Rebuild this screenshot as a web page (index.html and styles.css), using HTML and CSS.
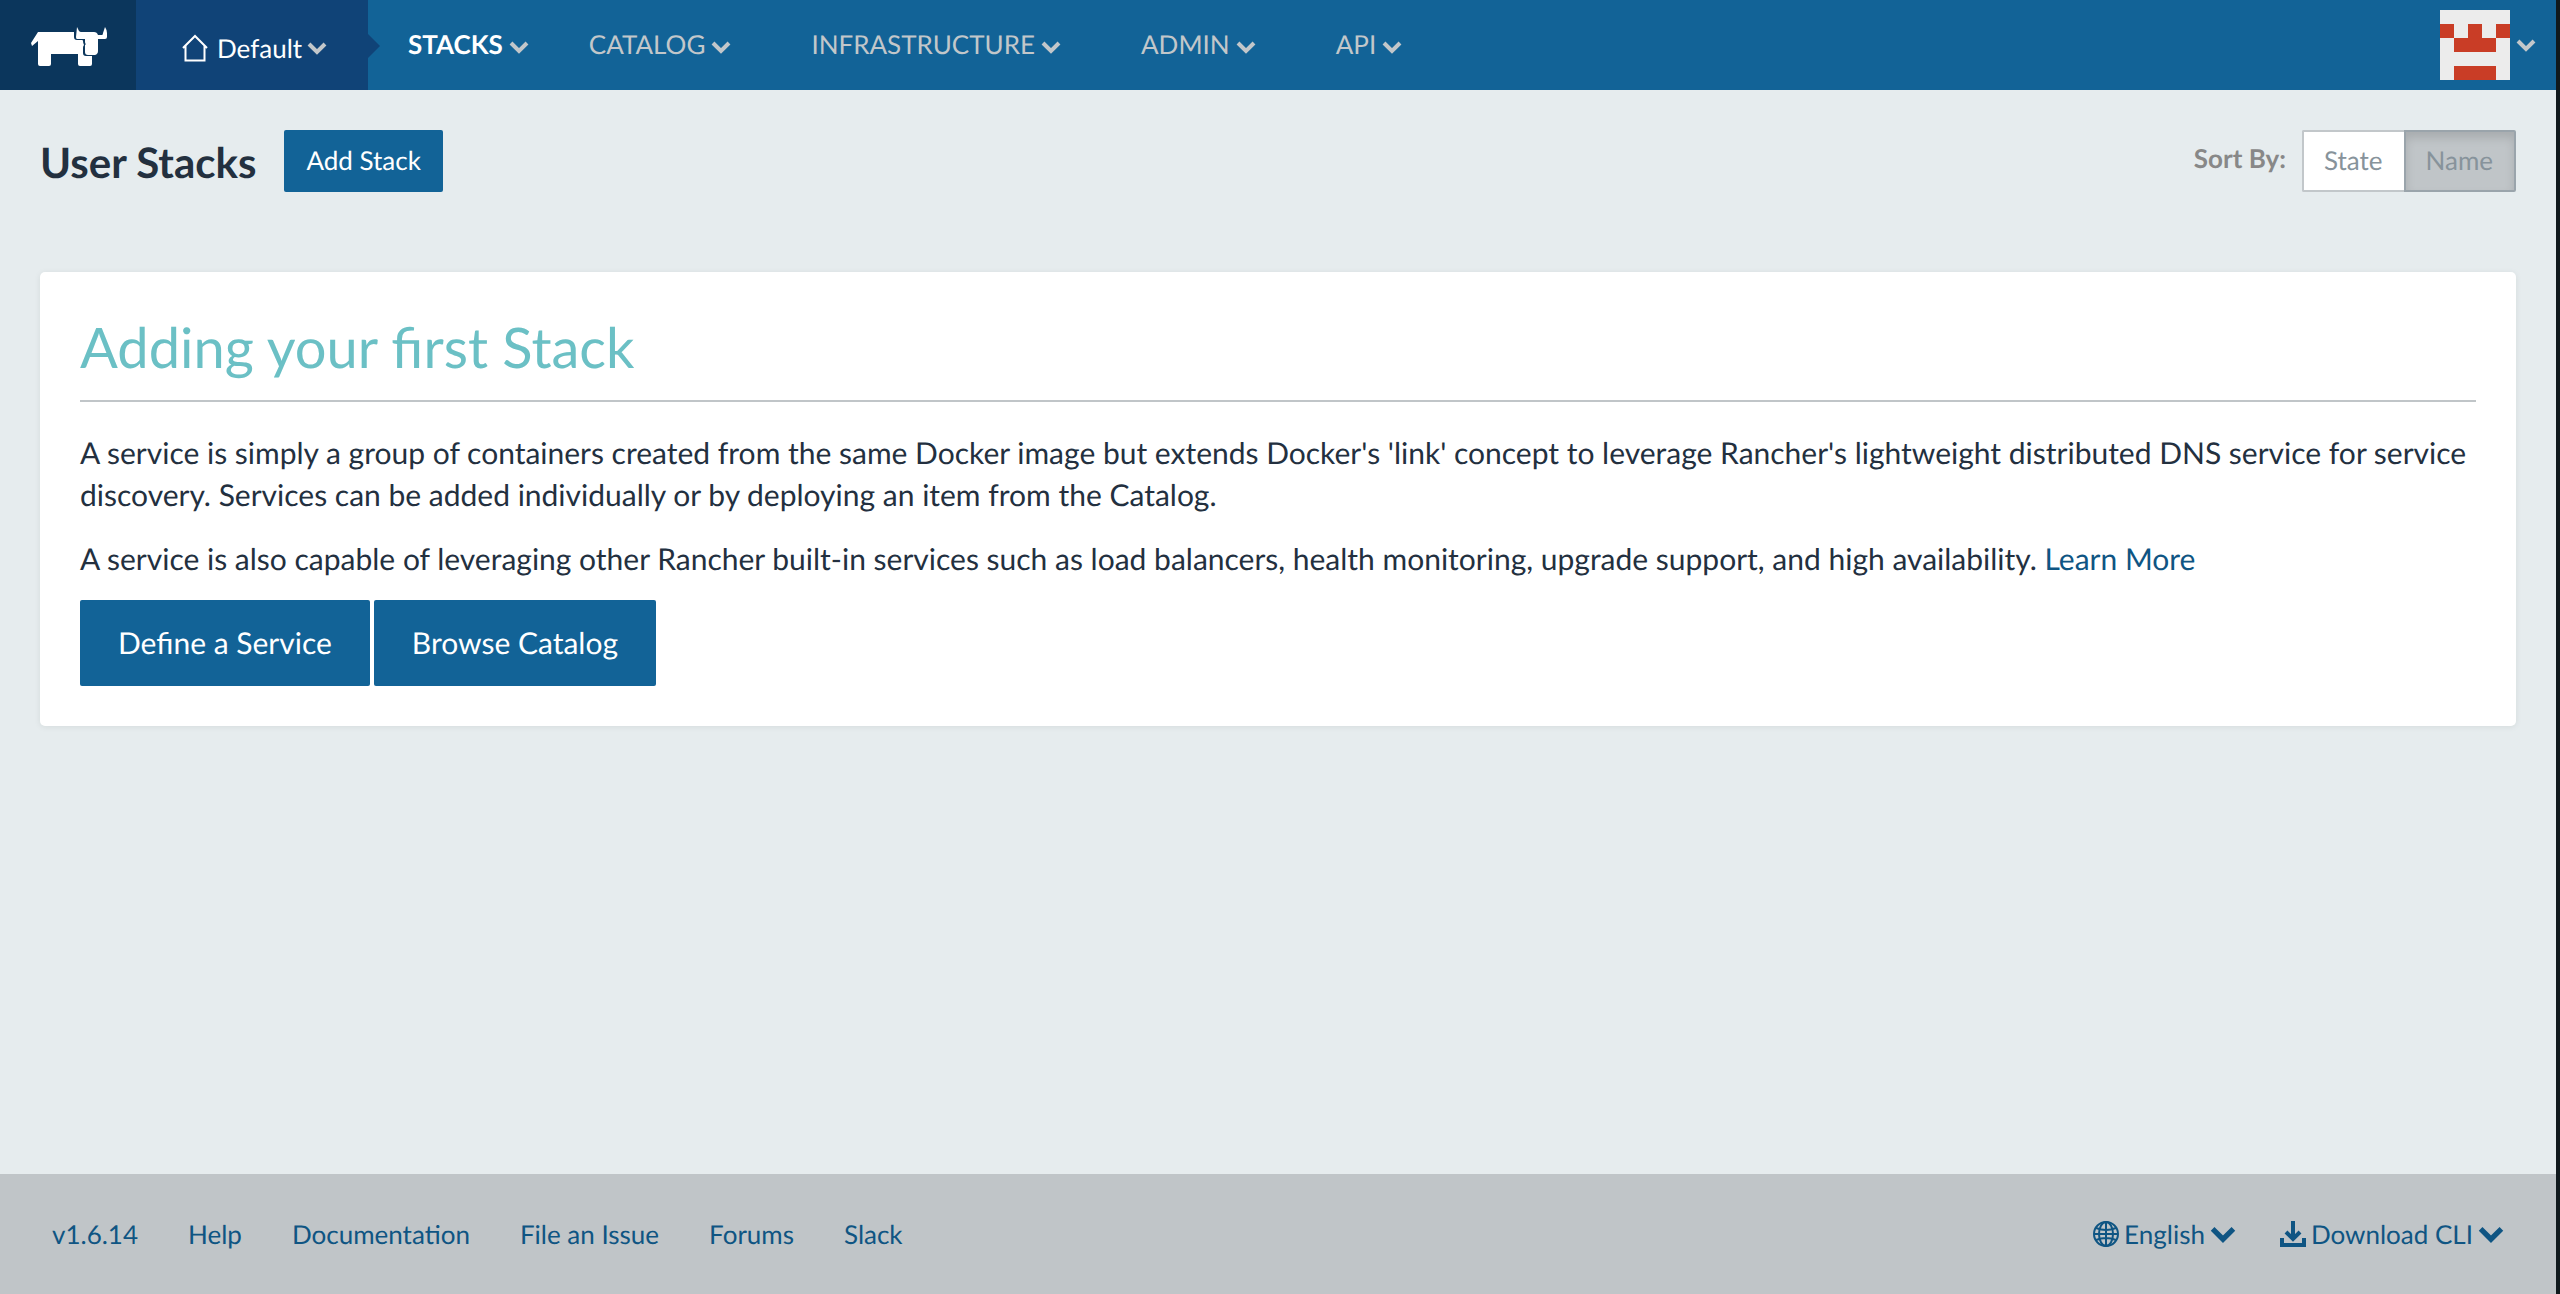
FILE: index.html
```
<!DOCTYPE html>
<html lang="en">
<head>
<meta charset="utf-8">
<title>User Stacks</title>
<link rel="stylesheet" href="styles.css">
</head>
<body>
<svg class="defs" aria-hidden="true">
  <symbol id="chevron" viewBox="0 0 20 12"><path d="M2 2l8 8 8-8"/></symbol>
</svg>
<div class="app">
  <header class="header">
    <a class="logo" href="#" aria-label="Rancher">
      <svg viewBox="0 0 78 40" width="78" height="40"><path fill="#fff" d="M7 5H43V10q0 3 3 3h5q1 0 1 1 0 2 1 4-1 1-1 3v5q0 3 3 3h6v8q0 2-2 2H49q-2 0-2-2V27H20V37q0 2-2 2H9q-2 0-2-2V14L1 19 0 16z"/><path fill="#fff" d="M46 0l2 4q1 1 2 1H63q3 0 4 3h4q1 0 1-2L74 0q2 3 2 6v4q0 2-2 2H67V24q0 3-3 4H57q-3 0-3-3V18l1-1q-1 0-1-2v-3H46q-1 0-1-2z"/></svg>
    </a>
    <button class="environment">
      <svg class="home" viewBox="0 0 26 28" width="26" height="28"><path d="M1 14L13 2l12 12M3.500 12V26.500H22.500V12" /></svg>
      <span>Default</span>
      <svg class="chevron"><use href="#chevron"/></svg>
    </button>
    <nav class="nav">
      <a class="active" href="#">STACKS<svg class="chevron"><use href="#chevron"/></svg></a>
      <a href="#">CATALOG<svg class="chevron"><use href="#chevron"/></svg></a>
      <a class="wide" href="#">INFRASTRUCTURE<svg class="chevron"><use href="#chevron"/></svg></a>
      <a class="wide" href="#">ADMIN<svg class="chevron"><use href="#chevron"/></svg></a>
      <a class="wide" href="#">API<svg class="chevron"><use href="#chevron"/></svg></a>
    </nav>
    <button class="user" aria-label="Account">
      <svg viewBox="0 0 5 5" width="70" height="70" shape-rendering="crispEdges"><path fill="#ececec" d="M0 0h5v5H0z"/><path fill="#c93d26" d="M0 1h1v1H0zM2 1h1v1H2zM4 1h1v1H4zM1 2h3v1H1zM1 4h3v1H1z"/></svg>
      <svg class="chevron"><use href="#chevron"/></svg>
    </button>
  </header>
  <main class="main">
    <div class="toolbar">
      <h1>User Stacks</h1>
      <button class="btn">Add Stack</button>
      <div class="sort">
        <span class="sort-label">Sort By:</span>
        <div class="group"><button>State</button><button class="selected">Name</button></div>
      </div>
    </div>
    <section class="card">
      <h2>Adding your first Stack</h2>
      <p>A service is simply a group of containers created from the same Docker image but extends Docker's 'link' concept to leverage Rancher's lightweight distributed DNS service for service discovery. Services can be added individually or by deploying an item from the Catalog.</p>
      <p>A service is also capable of leveraging other Rancher built-in services such as load balancers, health monitoring, upgrade support, and high availability. <a href="#">Learn More</a></p>
      <div class="actions"><button class="btn large">Define a Service</button><button class="btn large">Browse Catalog</button></div>
    </section>
  </main>
  <footer class="footer">
    <a href="#">v1.6.14</a>
    <a href="#">Help</a>
    <a href="#">Documentation</a>
    <a href="#">File an Issue</a>
    <a href="#">Forums</a>
    <a href="#">Slack</a>
    <button class="language">
      <svg class="globe" viewBox="0 0 26 26" width="26" height="26"><circle cx="13" cy="13" r="12"/><ellipse cx="13" cy="13" rx="7" ry="12"/><path d="M13 1v24M1 13h24M3 7q10 4 20 0M3 19q10-4 20 0"/></svg>
      <span>English</span>
      <svg class="chevron"><use href="#chevron"/></svg>
    </button>
    <button>
      <svg class="download" viewBox="0 0 26 26" width="26" height="26"><path d="M13 0v17M6 11l7 7 7-7M2 17v7h22v-7"/></svg>
      <span>Download CLI</span>
      <svg class="chevron"><use href="#chevron"/></svg>
    </button>
  </footer>
</div>
</body>
</html>
```
FILE: styles.css
```
* { box-sizing: border-box; }
body {
  margin: 0;
  background: #e6ecee;
  color: #23303f;
  font: 26px/36px Lato, sans-serif;
  text-rendering: geometricPrecision;
}
a { color: #0f5583; text-decoration: none; }
button { font: inherit; text-rendering: inherit; cursor: pointer; border: 0; background: none; padding: 0; white-space: nowrap; }
h1, h2, p { margin: 0; }
svg { fill: none; flex: none; }
.defs { position: absolute; width: 0; height: 0; }
.app {
  min-height: 100vh;
  display: flex;
  flex-direction: column;
  border-right: 4px solid #10191d;
}
.chevron { width: 20px; height: 12px; stroke: #c2c7ca; stroke-width: 4; overflow: visible; }
#chevron { overflow: visible; }

.header { display: flex; height: 90px; background: #126397; }
.logo { width: 136px; background: #0b365c; padding: 27px 0 0 31px; }
.environment {
  position: relative;
  display: flex;
  align-items: center;
  gap: 5px;
  width: 232px;
  padding: 6px 0 0 46px;
  background: #104377;
  color: #fff;
}
.environment::after {
  content: "";
  position: absolute;
  left: 100%;
  top: 34px;
  border: 12px solid transparent;
  border-right-width: 0;
  border-left-color: #104377;
}
.home { stroke: #fff; stroke-width: 2; margin-right: 4px; }
.nav { display: flex; padding-left: 10px; }
.nav a {
  display: flex;
  align-items: center;
  gap: 6px;
  padding: 0 30px 2px;
  color: #c2c7ca;
}
.nav .wide { padding-left: 50px; }
.nav .active { color: #fff; font-weight: 700; }
.nav .chevron { margin-top: 6px; }
.user { display: flex; align-items: center; gap: 6px; margin-left: auto; padding-right: 20px; }

.main { flex: 1; padding: 40px; }
.toolbar { display: flex; align-items: center; }
h1 { font-size: 42px; line-height: 46px; font-weight: 700; margin: 2px 28px 0 0; }
.btn { height: 62px; padding: 0 22px 2px; background: #126397; color: #fff; border-radius: 2px; }
.sort { display: flex; align-items: center; gap: 16px; margin-left: auto; }
.sort-label { color: #888; font-weight: 700; margin-top: -6px; }
.group { display: flex; }
.group button {
  height: 62px;
  padding: 0 21px 2px 20px;
  border: 2px solid #c2c7ca;
  border-right: 0;
  border-radius: 2px 0 0 2px;
  background: #fff;
  color: #87939b;
}
.group .selected {
  border: 2px solid #9aa4ab;
  border-radius: 0 2px 2px 0;
  background: #c0c5c8;
  box-shadow: inset 0 6px 10px rgba(0, 0, 0, .125);
}
.card {
  margin-top: 80px;
  padding: 40px;
  background: #fff;
  border-radius: 5px;
  box-shadow: 0 1px 6px rgba(0, 40, 30, .08);
}
h2 {
  padding: 4px 0 22px;
  margin-bottom: 30px;
  border-bottom: 2px solid #c0c5c8;
  color: #6bc0c5;
  font-size: 56px;
  line-height: 62px;
  font-weight: 400;
}
.card p { font-size: 30px; line-height: 42px; }
.card p + p { margin-top: 22px; }
.actions { display: flex; gap: 4px; margin-top: 20px; }
.large { height: 86px; padding: 0 38px; font-size: 30px; }

.footer {
  display: flex;
  align-items: center;
  gap: 50px;
  height: 120px;
  padding: 0 52px;
  background: #c0c5c8;
}
.footer button { display: flex; align-items: center; gap: 5px; color: #0f5583; }
.footer .language { margin-left: auto; margin-right: -6px; }
.footer .chevron { width: 26px; height: 16px; stroke: #0f5583; }
.globe { stroke: #0f5583; stroke-width: 2; }
.download { stroke: #0f5583; stroke-width: 4; }
```
